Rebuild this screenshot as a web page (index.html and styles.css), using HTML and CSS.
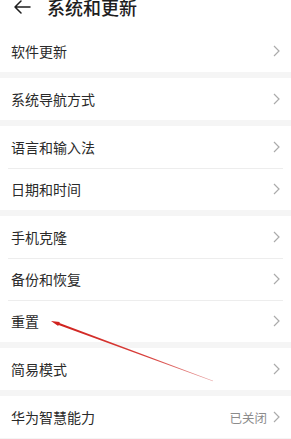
FILE: index.html
```html
<!DOCTYPE html>
<html lang="zh-CN">
<head>
<meta charset="utf-8" />
<meta name="viewport" content="width=device-width, initial-scale=1" />
<link rel="stylesheet" href="styles.css">
</head>
<body>
<div class="screen">
<div class="top">
<svg class="back" width="18" height="14" viewBox="0 0 18 14"><path d="M17 7H2M8 1L2 7l6 6" fill="none" stroke="#1e1e1e" stroke-width="1.5" stroke-linecap="round" stroke-linejoin="round"/></svg>
<h1>系统和更新</h1>
</div>

<ul class="group">
<li><span>软件更新</span><svg class="chev" viewBox="0 0 7 12"><path d="M1 1l5 5-5 5"/></svg></li>
</ul>
<ul class="group">
<li><span>系统导航方式</span><svg class="chev" viewBox="0 0 7 12"><path d="M1 1l5 5-5 5"/></svg></li>
</ul>
<ul class="group">
<li><span>语言和输入法</span><svg class="chev" viewBox="0 0 7 12"><path d="M1 1l5 5-5 5"/></svg></li>
<li><span>日期和时间</span><svg class="chev" viewBox="0 0 7 12"><path d="M1 1l5 5-5 5"/></svg></li>
</ul>
<ul class="group">
<li><span>手机克隆</span><svg class="chev" viewBox="0 0 7 12"><path d="M1 1l5 5-5 5"/></svg></li>
<li><span>备份和恢复</span><svg class="chev" viewBox="0 0 7 12"><path d="M1 1l5 5-5 5"/></svg></li>
<li><span>重置</span><svg class="chev" viewBox="0 0 7 12"><path d="M1 1l5 5-5 5"/></svg></li>
</ul>
<ul class="group">
<li><span>简易模式</span><svg class="chev" viewBox="0 0 7 12"><path d="M1 1l5 5-5 5"/></svg></li>
</ul>
<ul class="group">
<li><span>华为智慧能力</span><em>已关闭</em><svg class="chev" viewBox="0 0 7 12"><path d="M1 1l5 5-5 5"/></svg></li>
</ul>

<!-- hand-drawn annotation on top of the screenshot -->
<svg class="mark" width="291" height="439" viewBox="0 0 291 439">
<defs>
<linearGradient id="fade" x1="51" y1="321" x2="213" y2="381" gradientUnits="userSpaceOnUse">
<stop offset="0" stop-color="#d0201c"/>
<stop offset="0.6" stop-color="#d8403c"/>
<stop offset="1" stop-color="#e7a0a0"/>
</linearGradient>
</defs>
<polygon fill="url(#fade)" points="51,321 59.8,321.9 59.4,323 213.1,380.7 212.9,381.3 58.6,325 58.2,326.1"/>
</svg>
</div>
</body>
</html>
```

FILE: styles.css
```css
html {font-family: "Noto Sans CJK SC", "Noto Sans", sans-serif;}
body {margin: 0; background: #f5f5f5; color: #2a2a2a;}

.screen {position: relative; width: 291px; height: 439px; overflow: hidden; background: #f5f5f5;}

/* header, scrolled a little past the top */
.top {display: flex; align-items: center; gap: 16px; height: 22px; margin-top: -4px; padding: 0 13px 12px; background: #fff;}
.back {flex: none;}
.top h1 {margin: 0; font-size: 18px; font-weight: 500; line-height: 22px; color: #1e1e1e;}

/* setting groups */
.group {list-style: none; margin: 0 0 6px; padding: 0; background: #fff;}
.group li {display: flex; align-items: center; height: 42px; padding: 0 11px; font-size: 14px; position: relative;}
.group li + li::before {content: ""; position: absolute; left: 8px; right: 8px; top: 0; border-top: 1px solid #ededed;}
.group li span {flex: 1;}
.group li em {font-style: normal; font-size: 12.5px; color: #8c8c8c; margin-right: 6px;}

.chev {width: 7px; height: 12px; fill: none; stroke: #ababab; stroke-width: 1.2;}

.mark {position: absolute; left: 0; top: 0; pointer-events: none;}
```
